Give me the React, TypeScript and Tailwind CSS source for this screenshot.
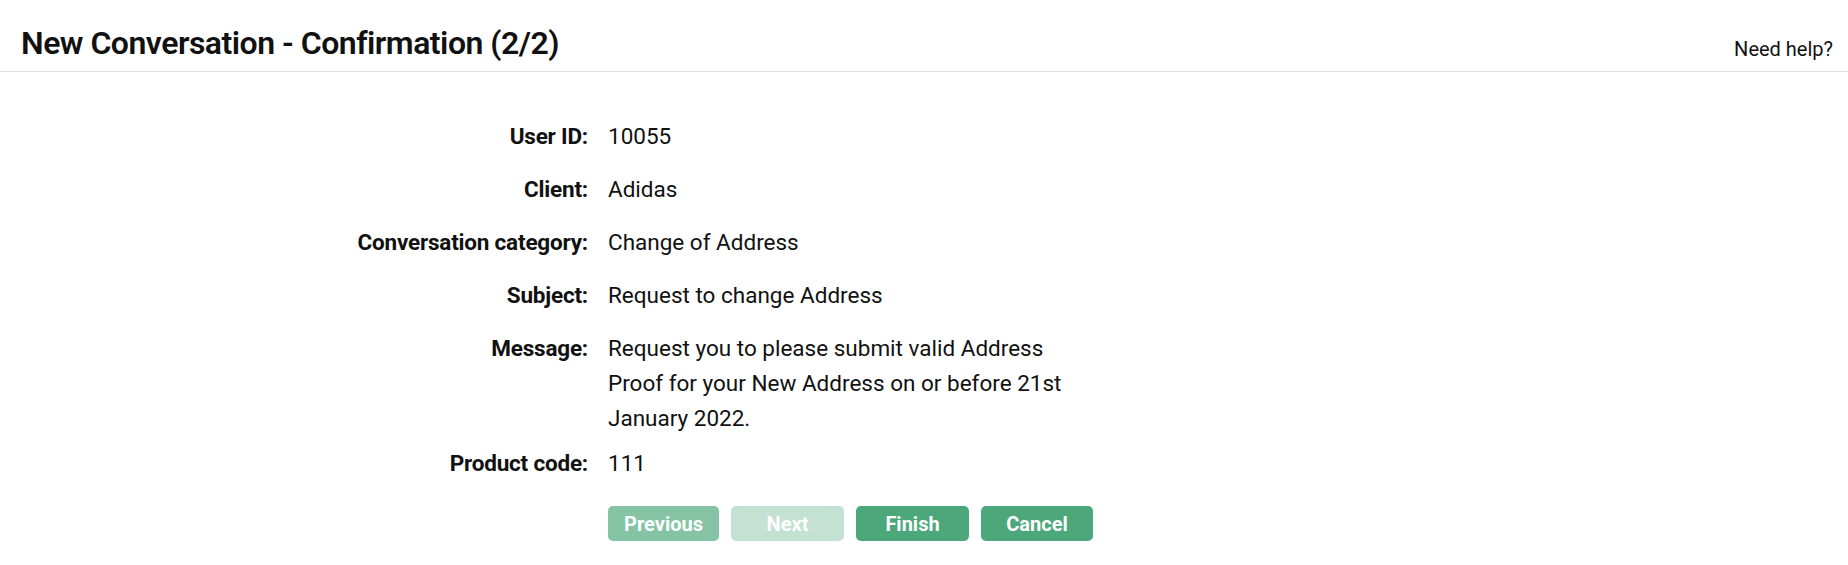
import React from "react";

type RowProps = { label: string; children: React.ReactNode; className?: string };

function Row({ label, children, className }: RowProps) {
  return (
    <div className={"flex items-start gap-[20px] leading-[35px] " + (className ?? "mb-[18px]")}>
      <div className="w-[588px] shrink-0 text-right font-bold tracking-[-0.2px]">{label}</div>
      <div className="w-[472px]">{children}</div>
    </div>
  );
}

export default function App() {
  return (
    <div className="min-h-screen bg-white text-[#111] font-['Roboto',sans-serif]">
      <header className="flex h-[72px] items-end justify-between border-b border-[#dedede] pl-[21px] pr-[15px] pb-[12px]">
        <h1 className="text-[32px] font-semibold leading-none tracking-[-0.5px]">New Conversation - Confirmation (2/2)</h1>
        <a href="#" className="text-[20px] leading-none text-[#111]">
          Need help?
        </a>
      </header>
      <main className="pt-[47px] text-[22.5px]">
        <Row label="User ID:">10055</Row>
        <Row label="Client:">Adidas</Row>
        <Row label="Conversation category:">Change of Address</Row>
        <Row label="Subject:">Request to change Address</Row>
        <Row label="Message:" className="mb-[10px]">
          Request you to please submit valid Address Proof for your New Address on or before 21st January 2022.
        </Row>
        <Row label="Product code:">111</Row>
        <div className="ml-[608px] mt-[25px] flex gap-[12px]">
          <button className="h-[35px] w-[111px] rounded-[5px] bg-[#84c4a5] text-[20px] font-bold text-white">Previous</button>
          <button className="h-[35px] w-[113px] rounded-[5px] bg-[#c3e2d3] text-[20px] font-bold text-white">Next</button>
          <button className="h-[35px] w-[113px] rounded-[5px] bg-[#4ca87b] text-[20px] font-bold text-white">Finish</button>
          <button className="h-[35px] w-[112px] rounded-[5px] bg-[#4ca87b] text-[20px] font-bold text-white">Cancel</button>
        </div>
      </main>
    </div>
  );
}
